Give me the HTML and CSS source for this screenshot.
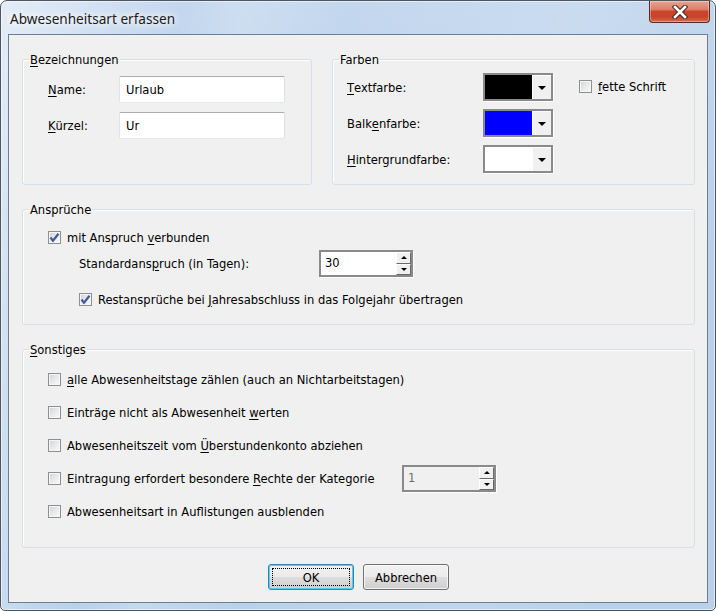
FILE: index.html
```html
<!DOCTYPE html>
<html lang="de">
<head>
<meta charset="utf-8">
<title>Abwesenheitsart erfassen</title>
<link rel="stylesheet" href="styles.css">
</head>
<body>
<div class="window">
  <div class="titlebar">
    <span class="title">Abwesenheitsart erfassen</span>
    <div class="close-btn">
      <svg width="16" height="14" viewBox="0 0 16 14">
        <path d="M3 2 L13 12 M13 2 L3 12" stroke="#4a2a24" stroke-width="4.6" stroke-linecap="square"/>
        <path d="M3 2 L13 12 M13 2 L3 12" stroke="#ffffff" stroke-width="2.6" stroke-linecap="square"/>
      </svg>
    </div>
  </div>
  <div class="client">
    <div class="toprow">
      <fieldset class="group">
        <legend><u>B</u>ezeichnungen</legend>
        <div class="bez-grid">
          <span class="lbl"><u>N</u>ame:</span>
          <div class="textbox">Urlaub</div>
          <span class="lbl"><u>K</u>ürzel:</span>
          <div class="textbox">Ur</div>
        </div>
      </fieldset>
      <fieldset class="group">
        <legend>Farben</legend>
        <div class="farb-grid">
          <span class="lbl"><u>T</u>extfarbe:</span>
          <div class="combo"><span class="swatch swatch-black"></span><span class="drop"><span class="arrow"></span></span></div>
          <label class="check fett"><span class="cb"></span><span><u>f</u>ette Schrift</span></label>
          <span class="lbl">Balk<u>e</u>nfarbe:</span>
          <div class="combo"><span class="swatch swatch-blue"></span><span class="drop"><span class="arrow"></span></span></div>
          <div class="filler"></div>
          <span class="lbl"><u>H</u>intergrundfarbe:</span>
          <div class="combo"><span class="swatch swatch-white"></span><span class="drop"><span class="arrow"></span></span></div>
          <div class="filler"></div>
        </div>
      </fieldset>
    </div>

    <fieldset class="group group-ansp">
      <legend>Ansprüche</legend>
      <div class="ansp-body">
        <label class="check row-a1"><span class="cb checked"><svg width="11" height="11" viewBox="0 0 11 11"><path d="M1.5 5.5 L4 8.8 L9.5 1.8" fill="none" stroke="#3d5a9e" stroke-width="2.2"/></svg></span><span>mit Anspruch <u>v</u>erbunden</span></label>
        <div class="row-a2">
          <span class="std-lbl">Standardans<u>p</u>ruch (in Tagen):</span>
          <div class="spin"><span class="spin-val">30</span><span class="spin-btns"><span class="sb"><span class="up"></span></span><span class="sb"><span class="down"></span></span></span></div>
        </div>
        <label class="check row-a3"><span class="cb checked"><svg width="11" height="11" viewBox="0 0 11 11"><path d="M1.5 5.5 L4 8.8 L9.5 1.8" fill="none" stroke="#3d5a9e" stroke-width="2.2"/></svg></span><span>Restansprüche bei <u>J</u>ahresabschluss in das Folgejahr übertragen</span></label>
      </div>
    </fieldset>

    <fieldset class="group group-sonst">
      <legend><u>S</u>onstiges</legend>
      <div class="sonst-body">
        <div class="srow"><label class="check"><span class="cb"></span><span><u>a</u>lle Abwesenheitstage zählen (auch an Nichtarbeitstagen)</span></label></div>
        <div class="srow"><label class="check"><span class="cb"></span><span>Einträge nicht als Abwesenheit <u>w</u>erten</span></label></div>
        <div class="srow"><label class="check"><span class="cb"></span><span>Abwesenheitszeit vom <u>Ü</u>berstundenkonto abziehen</span></label></div>
        <div class="srow"><label class="check check-wide"><span class="cb"></span><span>Eintragung erfordert besondere <u>R</u>echte der Kategorie</span></label>
          <div class="spin spin-disabled"><span class="spin-val">1</span><span class="spin-btns"><span class="sb"><span class="up"></span></span><span class="sb"><span class="down"></span></span></span></div>
        </div>
        <div class="srow"><label class="check"><span class="cb"></span><span>Abwesenheitsart in Auf<u>l</u>istungen ausblenden</span></label></div>
      </div>
    </fieldset>

    <div class="buttons">
      <button class="btn btn-default"><span class="focus">OK</span></button>
      <button class="btn">Abbrechen</button>
    </div>
  </div>
</div>
</body>
</html>
```

FILE: styles.css
```css
html, body {
  margin: 0;
  padding: 0;
  background: #ffffff;
}

body {
  font-family: "DejaVu Sans Condensed", "DejaVu Sans", sans-serif;
  font-size: 12.8px;
  color: #000;
}

u {
  text-decoration: underline;
  text-underline-offset: 2px;
}

.window {
  width: 716px;
  height: 611px;
  box-sizing: border-box;
  border: 1px solid #4d5560;
  border-radius: 7px 7px 5px 5px;
  padding: 0 7px 7px 7px;
  display: flex;
  flex-direction: column;
  background:
    linear-gradient(100deg, rgba(255,255,255,0.55) 0%, rgba(255,255,255,0.25) 12%, rgba(255,255,255,0) 22%, rgba(255,255,255,0.18) 30%, rgba(255,255,255,0) 42%, rgba(255,255,255,0.12) 70%, rgba(255,255,255,0) 85%),
    linear-gradient(180deg, #c3d7ee 0%, #b9d1ea 40%, #b9d1ea 100%);
  box-shadow: inset 0 0 0 1px rgba(255,255,255,0.55);
}

.titlebar {
  height: 33px;
  flex: none;
  display: flex;
  align-items: flex-start;
  justify-content: space-between;
}

.title {
  font-family: "Noto Sans", "Open Sans", sans-serif;
  font-size: 13.6px;
  color: #1a1a1a;
  margin-top: 8px;
  margin-left: 2px;
  text-shadow: 0 0 6px #ffffff, 0 0 10px #ffffff, 0 0 14px rgba(255,255,255,0.8);
}

.close-btn {
  width: 61px;
  height: 22px;
  box-sizing: border-box;
  margin-right: -2px;
  border: 1px solid #5b2a22;
  border-top: none;
  border-radius: 0 0 4px 4px;
  background: linear-gradient(180deg, #e8a493 0%, #dc7f6a 40%, #c9452b 50%, #c7442a 75%, #d66b4f 100%);
  box-shadow: inset 0 0 0 1px rgba(255,255,255,0.35);
  display: flex;
  align-items: center;
  justify-content: center;
}

.client {
  flex: 1;
  box-sizing: border-box;
  border: 1px solid #6d7f96;
  background: #f0f0f0;
  padding: 17px 12px 10px 13px;
  display: flex;
  flex-direction: column;
}

.group {
  margin: 0;
  padding: 0;
  border: 1px solid #d5dfe5;
  border-radius: 3px;
  box-shadow: inset 1px 1px 0 #ffffff;
  min-width: 0;
}

.group legend {
  margin-left: 6px;
  padding: 0 1px;
  line-height: 15px;
}

.toprow {
  display: grid;
  grid-template-columns: 290px 363px;
  column-gap: 20px;
}

.lbl {
  display: flex;
  align-items: center;
  white-space: nowrap;
}

.filler {
  height: 1px;
}

/* Bezeichnungen */
.bez-grid {
  display: grid;
  grid-template-columns: 71px 166px;
  grid-auto-rows: 27px;
  row-gap: 9px;
  padding: 9px 0 0 25px;
}

.textbox {
  box-sizing: border-box;
  background: #ffffff;
  border: 1px solid;
  border-color: #abadb3 #dbdfe6 #e3e9ef #e2e3ea;
  border-radius: 2px;
  padding: 5px 0 0 6px;
  line-height: 15px;
}

/* Farben */
.farb-grid {
  display: grid;
  grid-template-columns: 136px 70px auto;
  grid-auto-rows: 28px;
  row-gap: 8px;
  column-gap: 0;
  padding: 6px 0 11px 14px;
}

.combo {
  box-sizing: border-box;
  width: 70px;
  height: 28px;
  border: 2px solid #8a8a8a;
  box-shadow: 1px 1px 0 #ffffff;
  display: flex;
  background: #ffffff;
}

.swatch {
  flex: 1;
}
.swatch-black { background: #000000; }
.swatch-blue { background: #0000ff; }
.swatch-white { background: #ffffff; }

.drop {
  width: 19px;
  box-sizing: border-box;
  background: #f0f0f0;
  border-top: 1px solid #ffffff;
  border-left: 1px solid #ffffff;
  display: flex;
  align-items: center;
  justify-content: center;
}

.arrow {
  width: 0;
  height: 0;
  border-left: 4px solid transparent;
  border-right: 4px solid transparent;
  border-top: 4px solid #000;
  margin-top: 1px;
}

.fett {
  margin-left: 26px;
  align-self: start;
  margin-top: 6px;
}

/* checkbox */
.check {
  display: flex;
  align-items: center;
  gap: 6px;
  white-space: nowrap;
  line-height: 15px;
}

.cb {
  flex: none;
  width: 13px;
  height: 13px;
  box-sizing: border-box;
  border: 1px solid #8e8f8f;
  background: linear-gradient(135deg, #cfd1d4 0%, #e6e7e8 45%, #fbfbfb 100%);
  box-shadow: inset 0 0 0 1px #f6f6f6;
  display: flex;
  align-items: center;
  justify-content: center;
}

.cb svg {
  display: block;
}

/* Ansprüche */
.ansp-body {
  padding: 13px 0 17px 25px;
  display: flex;
  flex-direction: column;
}

.row-a1 {
  height: 15px;
}

.row-a2 {
  margin-top: 5px;
  margin-left: 31px;
  display: flex;
  align-items: center;
  height: 27px;
}

.std-lbl {
  width: 240px;
  white-space: nowrap;
}

.row-a3 {
  margin-top: 15px;
  margin-left: 31px;
  height: 15px;
}

.spin {
  box-sizing: border-box;
  width: 94px;
  height: 27px;
  border: 2px solid #8a8a8a;
  box-shadow: 1px 1px 0 #ffffff;
  background: #ffffff;
  display: flex;
}

.spin-val {
  flex: 1;
  padding: 3px 0 0 4px;
  line-height: 15px;
}

.spin-disabled {
  background: #f0f0f0;
}
.spin-disabled .spin-val {
  color: #6d6d6d;
}

.spin-btns {
  width: 15px;
  display: flex;
  flex-direction: column;
}

.sb {
  flex: 1;
  box-sizing: border-box;
  background: #f0f0f0;
  border: 1px solid;
  border-color: #ffffff #696969 #696969 #ffffff;
  display: flex;
  align-items: center;
  justify-content: center;
}

.up {
  width: 0;
  height: 0;
  border-left: 3px solid transparent;
  border-right: 3px solid transparent;
  border-bottom: 3px solid #000;
}

.down {
  width: 0;
  height: 0;
  border-left: 3px solid transparent;
  border-right: 3px solid transparent;
  border-top: 3px solid #000;
}

/* Sonstiges */
.group-ansp {
  margin-top: 17px;
}

.group-sonst {
  margin-top: 17px;
}

.sonst-body {
  padding: 9px 0 22px 25px;
  display: flex;
  flex-direction: column;
  row-gap: 6px;
}

.srow {
  height: 27px;
  display: flex;
  align-items: center;
}

.check-wide {
  width: 354px;
}

/* Buttons */
.buttons {
  margin-top: 16px;
  display: flex;
  justify-content: center;
  gap: 9px;
}

.btn {
  width: 86px;
  height: 26px;
  box-sizing: border-box;
  border: 1px solid #707070;
  border-radius: 3px;
  background: linear-gradient(180deg, #f2f2f2 0%, #ebebeb 48%, #dddddd 52%, #cfcfcf 100%);
  box-shadow: inset 0 0 0 1px rgba(255,255,255,0.7);
  font-family: inherit;
  font-size: 12.8px;
  color: #000;
  padding: 0;
  display: flex;
  align-items: center;
  justify-content: center;
}

.btn-default {
  border-color: #3c7fb1;
  box-shadow: inset 0 0 0 1px #48d0f8;
  padding: 3px;
}

.btn-default .focus {
  flex: 1;
  align-self: stretch;
  border: 1px dotted #000;
  display: flex;
  align-items: center;
  justify-content: center;
}
```
